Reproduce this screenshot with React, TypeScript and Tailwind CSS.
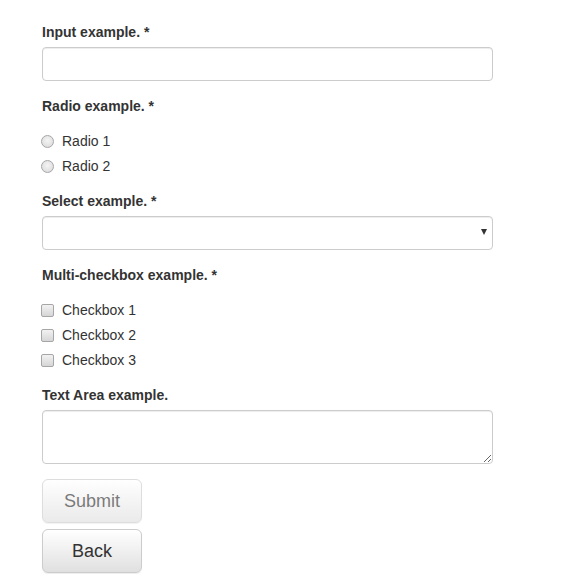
import React from 'react';

const labelCls = 'inline-block mb-[5px] font-bold text-[14px] leading-[20px] text-[#333]';
const fieldCls =
    'block w-full rounded-[4px] border border-[#ccc] bg-white px-3 py-[6px] text-[14px] leading-[20px] text-[#555] shadow-[inset_0_1px_1px_rgba(0,0,0,0.075)] outline-none';
const btnCls =
    'block w-[100px] h-[44px] rounded-[6px] border border-[#ccc] bg-[linear-gradient(to_bottom,#fff_0%,#e0e0e0_100%)] text-[18px] leading-[24px] shadow-[inset_0_1px_0_rgba(255,255,255,0.15),0_1px_1px_rgba(0,0,0,0.075)]';

function Radio({ label }: { label: string }) {
    return (
        <label className="flex items-center h-[20px] text-[14px] text-[#333] font-normal">
            <span className="ml-[-1px] mr-[8px] w-[13px] h-[13px] rounded-full border border-[#a6a6a6] bg-[radial-gradient(circle_at_50%_40%,#f4f4f4_0%,#d8d8d8_100%)]" />
            {label}
        </label>
    );
}

function Checkbox({ label }: { label: string }) {
    return (
        <label className="flex items-center h-[20px] text-[14px] text-[#333] font-normal">
            <span className="ml-[-1px] mr-[8px] w-[13px] h-[13px] rounded-[2px] border border-[#a6a6a6] bg-[linear-gradient(to_bottom,#f2f2f2_0%,#d6d6d6_100%)]" />
            {label}
        </label>
    );
}

export default function App() {
    return (
        <div className="min-h-[584px] bg-white pt-[22px] pl-[42px] font-['Liberation_Sans',Arial,sans-serif] text-[14px] text-[#333]">
            <form className="w-[451px]">
                {/* Input */}
                <div className="mb-[15px]">
                    <label className={labelCls}>Input example. *</label>
                    <input className={`${fieldCls} h-[34px]`} />
                </div>

                {/* Radio */}
                <div className="mb-[15px]">
                    <label className={labelCls}>Radio example. *</label>
                    <div className="mt-[10px] flex flex-col gap-[5px]">
                        <Radio label="Radio 1" />
                        <Radio label="Radio 2" />
                    </div>
                </div>

                {/* Select */}
                <div className="mb-[15px]">
                    <label className={labelCls}>Select example. *</label>
                    <div className="relative">
                        <select className={`${fieldCls} h-[34px] appearance-none`} />
                        <span className="absolute right-[6px] top-[13px] w-0 h-0 border-l-[3.5px] border-r-[3.5px] border-t-[6px] border-l-transparent border-r-transparent border-t-[#333]" />
                    </div>
                </div>

                {/* Checkboxes */}
                <div className="mb-[15px]">
                    <label className={labelCls}>Multi-checkbox example. *</label>
                    <div className="mt-[10px] flex flex-col gap-[5px]">
                        <Checkbox label="Checkbox 1" />
                        <Checkbox label="Checkbox 2" />
                        <Checkbox label="Checkbox 3" />
                    </div>
                </div>

                {/* Text area */}
                <div className="mb-[15px]">
                    <label className={labelCls}>Text Area example.</label>
                    <textarea rows={2} className={`${fieldCls} h-[54px]`} />
                </div>

                <button type="button" disabled className={`${btnCls} text-[#333] opacity-65`}>
                    Submit
                </button>
                <button type="button" className={`${btnCls} mt-[6px] text-[#333]`}>
                    Back
                </button>
            </form>
        </div>
    );
}
